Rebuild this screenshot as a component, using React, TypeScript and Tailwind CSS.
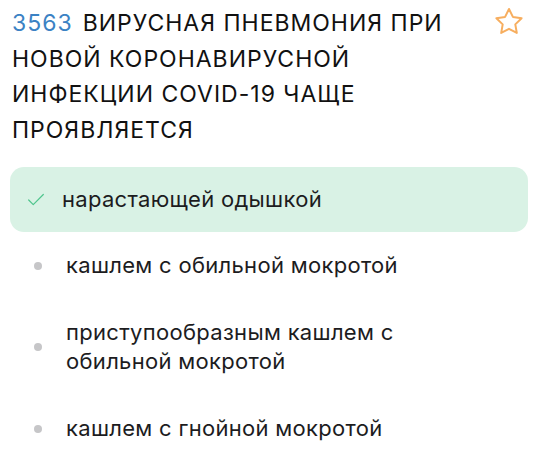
import { Check } from "lucide-react";

const answers = [
  "кашлем с обильной мокротой",
  "приступообразным кашлем с обильной мокротой",
  "кашлем с гнойной мокротой",
];

function StarIcon() {
  return (
    <svg viewBox="0 0 24 24" className="w-[34px] h-[34px]" fill="none" stroke="#f7ae5f" strokeWidth="1.4" strokeLinejoin="round">
      <path d="M12 2.8l2.75 5.6 6.15.9-4.45 4.35 1.05 6.1L12 16.85l-5.5 2.9 1.05-6.1L3.1 9.3l6.15-.9L12 2.8z" />
    </svg>
  );
}

export default function App() {
  return (
    <div className="w-[538px] h-[454px] bg-white overflow-hidden font-['Inter',sans-serif] text-[#1c1c1e]">
      {/* Question header */}
      <div className="flex items-start justify-between pl-3 pr-3">
        <h2 className="pt-[6px] text-[23px] leading-[35.5px] tracking-[1px] text-[#111]">
          <span className="text-[#3b82c4] mr-[10px]">3563</span>
          ВИРУСНАЯ ПНЕВМОНИЯ ПРИ
          <br />
          НОВОЙ КОРОНАВИРУСНОЙ
          <br />
          ИНФЕКЦИИ COVID-19 ЧАЩЕ
          <br />
          ПРОЯВЛЯЕТСЯ
        </h2>
        <div className="pt-[5px]">
          <StarIcon />
        </div>
      </div>

      {/* Answer list */}
      <div className="px-[10px] mt-[19px]">
        <div className="flex items-center rounded-[14px] bg-[#d9f2e5] h-[65px] pl-[15px]">
          <Check className="w-[22px] h-[22px] text-[#4fc58d]" strokeWidth={1.3} />
          <span className="ml-[15px] text-[22px] leading-[29px] tracking-[0.3px]">нарастающей одышкой</span>
        </div>

        {answers.map((a) => (
          <div key={a} className="flex items-center py-[19px] pl-[24px]">
            <span className="w-[8px] h-[8px] rounded-full bg-[#c6c6c8] shrink-0" />
            <span className="ml-[24px] text-[22px] leading-[29px] tracking-[0.3px] max-w-[370px]">{a}</span>
          </div>
        ))}
      </div>
    </div>
  );
}
